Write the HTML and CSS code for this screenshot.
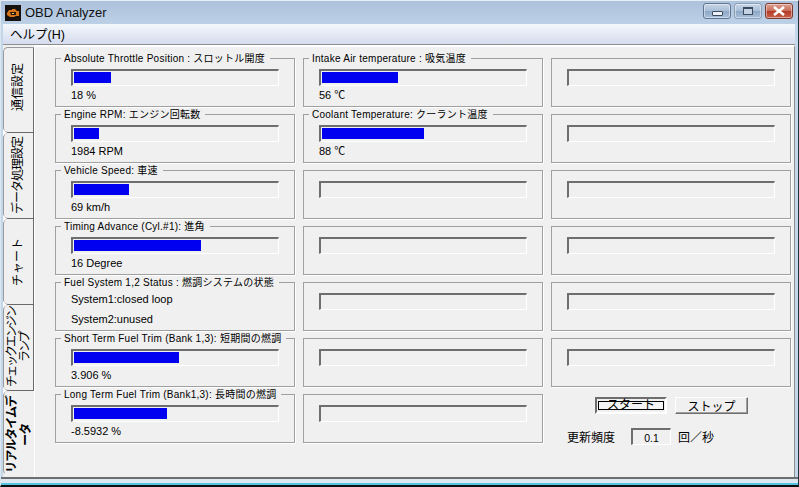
FILE: index.html
```html
<!DOCTYPE html>
<html lang="ja">
<head>
<meta charset="utf-8">
<title>OBD Analyzer</title>
<link rel="stylesheet" href="styles.css">
</head>
<body>
<div class="window">
  <header class="titlebar">
    <svg class="appicon" width="16" height="16" viewBox="0 0 16 16"><rect width="16" height="16" fill="#17120f"/><path d="M2 8 L4 5 H7 V4 H10 L12 6 H14 V11 H11 L9 12 H5 L2 10 Z" fill="#d9761c"/><path d="M5 7 H11 V10 H6 Z" fill="#2a1a10"/><rect x="7" y="8" width="2" height="1" fill="#f2c14a"/></svg>
    <span class="apptitle">OBD Analyzer</span>
    <div class="winbtns">
      <div class="winbtn minbtn"><span class="minglyph"></span></div>
      <div class="winbtn maxbtn"><span class="maxglyph"></span></div>
      <div class="winbtn closebtn">
        <svg width="14" height="10" viewBox="0 0 14 10"><path d="M2 1 L12 9 M12 1 L2 9" stroke="#fff" stroke-width="2.6"/></svg>
      </div>
    </div>
  </header>
  <nav class="menubar"><span>ヘルプ(H)</span></nav>
  <main class="client">
    <div class="tabs">
      <div class="tab first"><span class="tablabel">通信設定</span></div>
      <div class="tab"><span class="tablabel snug">データ処理設定</span></div>
      <div class="tab"><span class="tablabel">チャート</span></div>
      <div class="tab"><span class="tablabel tight">チェックエンジン<br>ランプ</span></div>
      <div class="tab active"><span class="tablabel snug">リアルタイムデ<br>ータ</span></div>
    </div>
    <div class="page">
      <fieldset class="group"><legend>Absolute Throttle Position : スロットル開度</legend><div class="bar"><div class="fill" style="width:37px"></div></div><div class="value">18 %</div></fieldset>
      <fieldset class="group"><legend>Intake Air temperature : 吸気温度</legend><div class="bar"><div class="fill" style="width:76px"></div></div><div class="value">56 ℃</div></fieldset>
      <fieldset class="group"><legend class="blank"></legend><div class="bar"></div></fieldset>

      <fieldset class="group"><legend>Engine RPM: エンジン回転数</legend><div class="bar"><div class="fill" style="width:25px"></div></div><div class="value">1984 RPM</div></fieldset>
      <fieldset class="group"><legend>Coolant Temperature: クーラント温度</legend><div class="bar"><div class="fill" style="width:102px"></div></div><div class="value">88 ℃</div></fieldset>
      <fieldset class="group"><legend class="blank"></legend><div class="bar"></div></fieldset>

      <fieldset class="group"><legend>Vehicle Speed: 車速</legend><div class="bar"><div class="fill" style="width:55px"></div></div><div class="value">69 km/h</div></fieldset>
      <fieldset class="group"><legend class="blank"></legend><div class="bar"></div></fieldset>
      <fieldset class="group"><legend class="blank"></legend><div class="bar"></div></fieldset>

      <fieldset class="group"><legend>Timing Advance (Cyl.#1): 進角</legend><div class="bar"><div class="fill" style="width:127px"></div></div><div class="value">16 Degree</div></fieldset>
      <fieldset class="group"><legend class="blank"></legend><div class="bar"></div></fieldset>
      <fieldset class="group"><legend class="blank"></legend><div class="bar"></div></fieldset>

      <fieldset class="group"><legend>Fuel System 1,2 Status : 燃調システムの状態</legend><div class="status"><div>System1:closed loop</div><div>System2:unused</div></div></fieldset>
      <fieldset class="group"><legend class="blank"></legend><div class="bar"></div></fieldset>
      <fieldset class="group"><legend class="blank"></legend><div class="bar"></div></fieldset>

      <fieldset class="group"><legend>Short Term Fuel Trim (Bank 1,3): 短期間の燃調</legend><div class="bar"><div class="fill" style="width:105px"></div></div><div class="value">3.906 %</div></fieldset>
      <fieldset class="group"><legend class="blank"></legend><div class="bar"></div></fieldset>
      <fieldset class="group"><legend class="blank"></legend><div class="bar"></div></fieldset>

      <fieldset class="group"><legend>Long Term Fuel Trim (Bank1,3): 長時間の燃調</legend><div class="bar"><div class="fill" style="width:93px"></div></div><div class="value">-8.5932 %</div></fieldset>
      <fieldset class="group"><legend class="blank"></legend><div class="bar"></div></fieldset>
      <div class="controls">
        <div class="btnrow">
          <div class="btn default"><span class="focus">スタート</span></div>
          <div class="btn">ストップ</div>
        </div>
        <div class="freqrow">
          <span class="freqlabel">更新頻度</span>
          <span class="freqbox">0.1</span>
          <span>回／秒</span>
        </div>
      </div>
    </div>
  </main>
  <div class="bottomedge"></div>
</div>
</body>
</html>
```
FILE: styles.css
```css
* { box-sizing: border-box; }
html, body { margin: 0; padding: 0; }
body {
  width: 799px;
  height: 487px;
  overflow: hidden;
  background: #000;
  font-family: "Liberation Sans", "Noto Sans CJK JP", sans-serif;
  font-size: 11px;
  color: #000;
}
.window {
  width: 799px;
  height: 487px;
  display: flex;
  flex-direction: column;
  background: #c3d6ea;
  border-top: 1px solid #e6eef6;
  border-left: 1px solid #dbe6f0;
  border-right: 1px solid #20323e;
  border-bottom: 2px solid #0a0f12;
}
.titlebar {
  height: 23px;
  display: flex;
  align-items: center;
  padding: 0 5px 0 4px;
  background: linear-gradient(#adc2db, #bcd0e6);
  flex: none;
}
.appicon { flex: none; }
.apptitle { margin-left: 4px; font-size: 13px; color: #111; }
.winbtns { margin-left: auto; display: flex; gap: 3px; padding-bottom: 3px; }
.winbtn {
  height: 16px;
  border: 1px solid #5f7690;
  border-radius: 3px;
  display: flex;
  align-items: center;
  justify-content: center;
  background: linear-gradient(#c7d6e7 0%, #a9bed7 50%, #8da8c6 52%, #a9c0da 100%);
  box-shadow: inset 0 0 0 1px rgba(255,255,255,.45);
}
.minbtn { width: 28px; }
.maxbtn { width: 28px; border-color: #8aa0b8; }
.closebtn {
  width: 28px;
  border-color: #7a3a30;
  background: linear-gradient(#dda294 0%, #c96a58 50%, #b23a26 52%, #c8604a 100%);
}
.minglyph { width: 11px; height: 5px; margin-top: 4px; background: #eef2f7; border: 1px solid #3c4c5e; border-radius: 1px; }
.maxglyph { width: 10px; height: 8px; border: 1px solid #3c4c5e; border-top-width: 2px; background: #c4d3e4; }
.menubar {
  height: 20px;
  flex: none;
  display: flex;
  align-items: center;
  padding: 0 2px 2px 7px;
  margin: 0 3px 0 2px;
  font-size: 12.5px;
  background: linear-gradient(#f4f7fb, #d5dcee);
}
.client {
  flex: 1;
  min-height: 0;
  display: flex;
  margin: 0 3px 0 2px;
  background: #f0f0f0;
  border-top: 1px solid #8f8f8f;
}
.tabs {
  width: 31px;
  flex: none;
  display: flex;
  flex-direction: column;
  padding-top: 2px;
}
.tab {
  height: 86px;
  display: flex;
  align-items: center;
  justify-content: center;
  position: relative;
  border-left: 1px solid #9a9a9a;
  border-right: 1px solid #696969;
  border-bottom: 1px solid #696969;
  border-top-left-radius: 5px;
  border-bottom-left-radius: 5px;
  font-size: 12px;
  line-height: 13px;
}
.tab.first { border-top: 1px solid #9a9a9a; padding-bottom: 5px; }
.tab::after {
  content: "";
  position: absolute;
  left: -1px;
  bottom: -5px;
  border-left: 4px solid #fff;
  border-top: 4px solid transparent;
  border-bottom: 4px solid transparent;
}
.tab.active {
  border-right-color: transparent;
  border-bottom: 1px solid transparent;
  font-weight: 700;
  height: 84px;
  line-height: 14px;
  padding-top: 3px;
}
.tab.active::after { display: none; }
.tablabel {
  writing-mode: vertical-rl;
  text-orientation: sideways;
  transform: rotate(180deg);
  white-space: nowrap;
  text-align: center;
}
.tablabel.snug { letter-spacing: -1px; }
.tablabel.tight { letter-spacing: -2px; }
.page {
  flex: 1;
  min-width: 0;
  border-left: 1px solid #fff;
  border-right: 1px solid #8f8f8f;
  border-top: 2px solid #fff;
  padding: 6px 0 0 20px;
  display: grid;
  grid-template-columns: repeat(3, 240px);
  grid-auto-rows: 54px;
  gap: 2px 8px;
  align-content: start;
}
.group {
  margin: 0;
  padding: 5px 15px 0 15px;
  min-width: 0;
  height: 54px;
  border: 1px solid #a0a0a0;
  box-shadow: 1px 1px 0 #fff;
  display: block;
}
.group legend {
  margin-left: -10px;
  padding: 0 5px 0 3px;
  height: 11px;
  line-height: 11px;
  font-size: 10px;
  letter-spacing: .25px;
  white-space: nowrap;
}
.group legend.blank { padding: 0; width: 0; margin: 0; }
.bar {
  height: 17px;
  width: 208px;
  background: #f0f0f0;
  border: 1px solid #fff;
  border-top: 2px solid #6e6e6e;
  border-left: 2px solid #6e6e6e;
  padding: 1px 0 2px 1px;
  display: flex;
}
.fill { height: 100%; background: #0000f0; }
.value { margin-top: 2px; height: 14px; line-height: 14px; font-size: 11px; }
.status { font-size: 11px; margin-top: -4px; line-height: 20px; }
.controls { padding-top: 8px; padding-left: 16px; }
.btnrow { display: flex; gap: 8px; padding-left: 28px; height: 17px; }
.btn {
  width: 73px;
  height: 17px;
  display: flex;
  align-items: center;
  justify-content: center;
  font-size: 12px;
  border: 1px solid #fff;
  border-right: 1px solid #6e6e6e;
  border-bottom: 1px solid #6e6e6e;
  box-shadow: inset -1px -1px 0 #a0a0a0;
}
.btn.default {
  width: 72px;
  border: 2px solid #fff;
  border-top: 2px solid #6e6e6e;
  border-left: 2px solid #6e6e6e;
  box-shadow: none;
  padding: 1px;
}
.focus {
  display: flex;
  align-items: center;
  justify-content: center;
  width: 100%;
  height: 9px;
  border: 1px solid #000;
  background: #f4f4f4;
  line-height: 9px;
}
.freqrow { display: flex; align-items: center; margin-top: 14px; font-size: 12px; height: 17px; }
.freqlabel { width: 64px; }
.freqbox {
  width: 40px;
  height: 17px;
  margin-right: 7px;
  padding-top: 2px;
  display: flex;
  align-items: center;
  justify-content: center;
  font-size: 10.5px;
  border: 1px solid #fff;
  border-top: 2px solid #6e6e6e;
  border-left: 2px solid #6e6e6e;
}
.bottomedge {
  height: 8px;
  flex: none;
  background: linear-gradient(#6e6e6e 0, #6e6e6e 2px, #dbe8f2 2px, #dbe8f2 6px, #55c4e0 6px, #55c4e0 8px);
}
```
